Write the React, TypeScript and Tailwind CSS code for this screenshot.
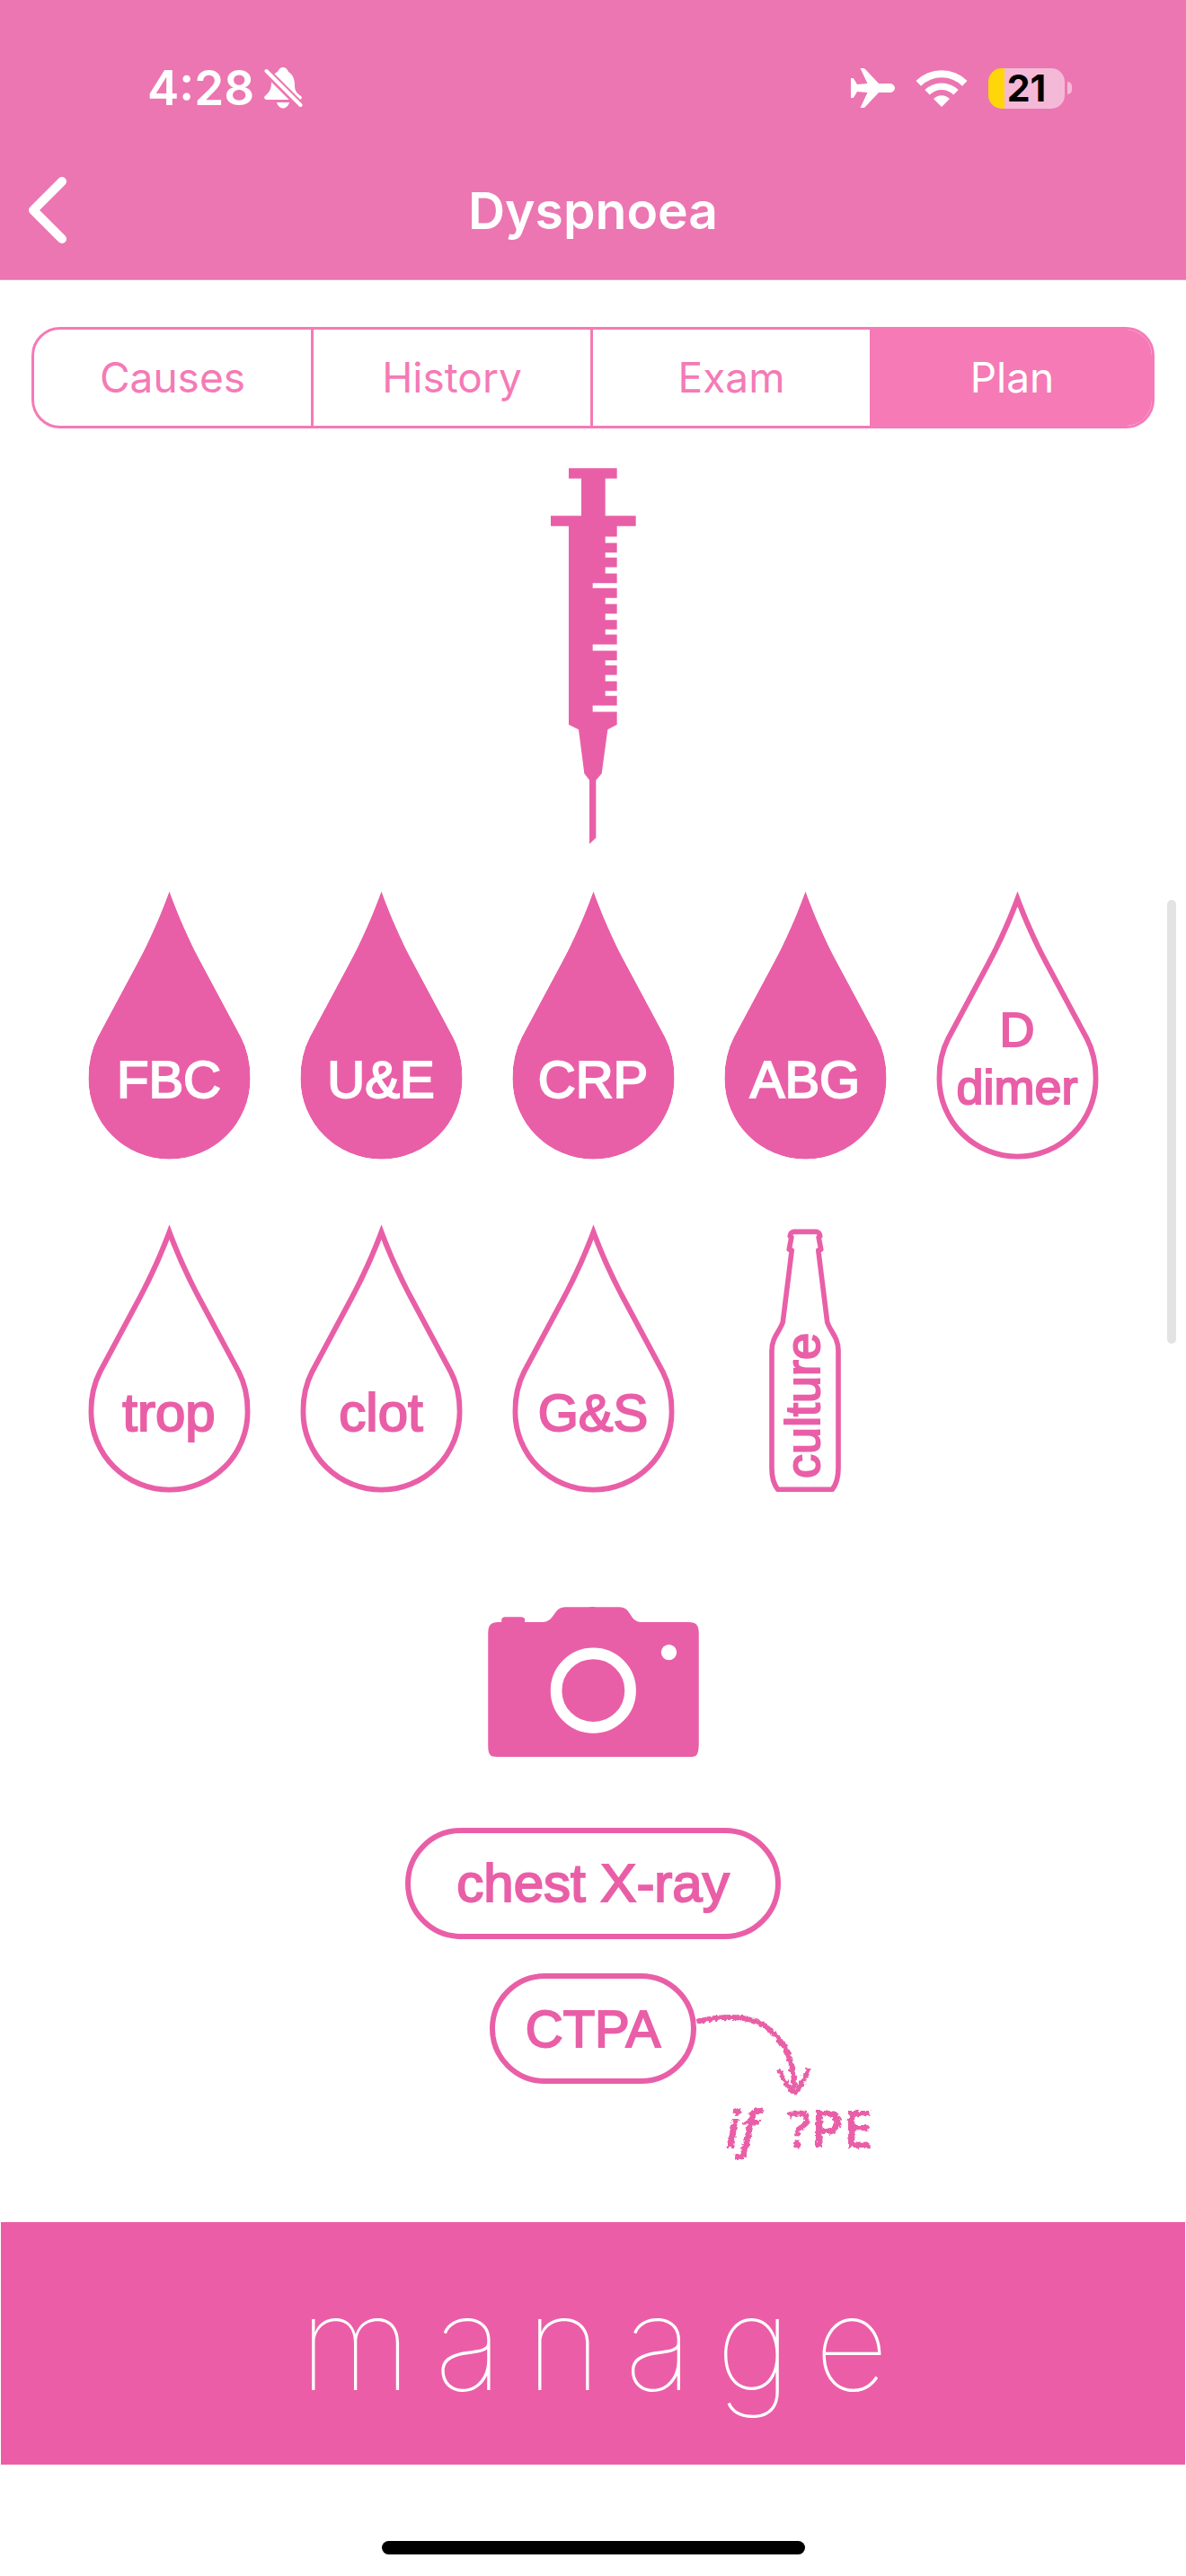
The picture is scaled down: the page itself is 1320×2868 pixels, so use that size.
import { useId, type ReactNode } from "react";

const PINK = "#e95fa7";

function BellOff() {
  return (
    <svg viewBox="0 0 43 46" className="h-[46px] w-[43px]" fill="#fff" aria-label="Silent mode">
      <path d="M21 0 C24 0 26 2 27 5 C32 8 34 13 34 20 C34 27 37 29 41 32 C43 34 41 36 39 36 H3 C0 36 -1 33 2 31 C5 28 8 25 8 17 C8 11 10 7 15 5 C16 2 18 0 21 0 Z" />
      <path d="M14 39 H28 C27 43 24 45.500 21 45.500 C18 45.500 15 43 14 39 Z" />
      <path d="M2 4 L41 43" stroke="#ec76b1" strokeWidth="9" />
      <path d="M2.500 4 L40.500 42" stroke="#fff" strokeWidth="4" strokeLinecap="round" />
    </svg>
  );
}

function Airplane() {
  return (
    <svg viewBox="0 0 49 44" className="h-[44px] w-[49px]" fill="#fff" aria-label="Airplane mode">
      <path d="M49 22 C49 25 46 27 43 27 H31 L16 43 C15 44 14 44 13 44 H10.500 L18.500 27 L7 26 L3.500 32 C3 33 2 33 0 33 V11 C2 11 3 11 3.500 12 L7 18 L18.500 17 L10.500 0 H13 C14 0 15 0 16 1 L31 17 H43 C46 17 49 19 49 22 Z" />
    </svg>
  );
}

function Wifi() {
  return (
    <svg viewBox="0 0 58 43" className="h-[43px] w-[58px]" fill="#fff" aria-label="Wi-Fi">
      <path d="M0.500 13 A40.500 40.500 0 0 1 57.500 13 L52 18.700 A33 33 0 0 0 6 18.700 Z" />
      <path d="M10.300 23 A27 27 0 0 1 47.700 23 L42.300 28.500 A19 19 0 0 0 15.700 28.500 Z" />
      <path d="M20 33 A12.500 12.500 0 0 1 38 33 L29 42 Z" />
    </svg>
  );
}

function Battery() {
  return (
    <div className="flex items-center gap-[3px]" aria-label="Battery 21 percent">
      <div className="flex h-[45px] w-[85px] items-center justify-center rounded-[15px] bg-[linear-gradient(to_right,#ffd60a_18px,#f5b9d8_18px)] text-[41px] font-bold leading-none text-black">
        21
      </div>
      <div className="h-[14px] w-[5px] rounded-r-full bg-[#f5b9d8]" />
    </div>
  );
}

function Syringe() {
  return (
    <svg viewBox="100 64 285 1256" className="h-[419px] w-[95px]" fill={PINK} aria-hidden="true">
      <path d="M160 64 H321 V99 H282 V223 H384 V258 H321 V293 H282 V314 H321 V346 H282 V363 H321 V395 H282 V416 H321 V448 H240 V465 H321 V498 H282 V518 H321 V550 H282 V571 H321 V603 H282 V620 H321 V653 H240 V674 H321 V706 H282 V723 H321 V755 H282 V776 H321 V808 H282 V825 H321 V857 H240 V878 H321 V921 L290 937 L270 1084 L251 1106 V1299 L229 1320 V1106 L212 1084 L193 937 L160 921 V258 H100 V223 H202 V99 H160 Z" />
    </svg>
  );
}

function Drop({ filled = false }: { filled?: boolean }) {
  const id = useId();
  const d =
    "M326 66 C360 160 400 245 432 305 L566 555 Q597 615 597 692 A271 271 0 0 1 55 692 Q55 615 86 555 L220 305 C252 245 292 160 326 66 Z";
  return (
    <svg viewBox="54 66 544 897" className="absolute inset-0 h-full w-full" aria-hidden="true">
      <clipPath id={id}>
        <path d={d} />
      </clipPath>
      <path
        d={d}
        clipPath={`url(#${id})`}
        fill={filled ? PINK : "#fff"}
        stroke={PINK}
        strokeWidth={filled ? 0 : 36}
        strokeMiterlimit={10}
      />
    </svg>
  );
}

function DropTest({ filled, size, children }: { filled?: boolean; size: string; children: ReactNode }) {
  return (
    <button
      className={`relative flex h-[299px] w-[181px] items-end justify-center text-center leading-[64px] [-webkit-text-stroke:2px_currentColor] ${size} ${
        filled ? "text-white" : "text-[#e95fa7]"
      }`}
    >
      <Drop filled={filled} />
      <span className="relative">{children}</span>
    </button>
  );
}

function Bottle() {
  return (
    <svg viewBox="108 54 241 881" className="absolute inset-0 h-full w-full" fill="none" stroke={PINK} strokeWidth="17" strokeLinejoin="round" aria-hidden="true">
      <path d="M189 62 H268 Q277 63 279 77 L274 80 L282 121 L273 124 L303 365 C312 395 340 415 340 460 V855 Q340 900 320 926 H137 Q117 900 117 855 V460 C117 415 145 395 154 365 L184 124 L175 121 L183 80 L178 77 Q180 63 189 62 Z" />
    </svg>
  );
}

function Camera() {
  return (
    <svg viewBox="69 57 705 502" className="h-[167px] w-[235px]" fill={PINK} aria-hidden="true">
      <path d="M110 108 H114 V100 Q116 91 126 91 H180 Q191 92 192 100 V108 H250 C295 108 285 58 328 58 H405 Q418 55 430 58 H508 C550 58 540 108 582 108 H740 C765 108 774 118 774 145 V520 C772 550 768 559 750 559 H100 C75 559 69 552 69 520 V145 C70 115 78 108 110 108 Z" />
      <circle cx="421" cy="337" r="124" fill="none" stroke="#fff" strokeWidth="38" />
      <circle cx="674" cy="209" r="26" fill="#fff" />
    </svg>
  );
}

function Note() {
  return (
    <div className="absolute left-full top-[46px] w-[210px] text-[#e95fa7]">
      <svg viewBox="774 2243 204 92" className="h-[92px] w-[204px]" fill="none" stroke={PINK} strokeLinecap="round" strokeLinejoin="round" aria-hidden="true">
        <defs>
          <filter id="chalk" x="-5%" y="-5%" width="110%" height="110%">
            <feTurbulence type="fractalNoise" baseFrequency="0.25" numOctaves="2" seed="4" result="n" />
            <feDisplacementMap in="SourceGraphic" in2="n" scale="6" xChannelSelector="R" yChannelSelector="G" />
          </filter>
        </defs>
        <g filter="url(#chalk)">
          <path d="M777 2250 C812 2243 838 2244 857 2261 C874 2276 883 2298 883 2322" strokeWidth="6" />
          <path d="M867 2306 Q874 2323 884 2330 Q894 2318 898 2304" strokeWidth="5" />
        </g>
      </svg>
      <p className="flex gap-[32px] pl-[32px] font-['Noto_Sans',sans-serif] text-[58px] font-semibold leading-[68px] [filter:url(#chalk)]">
        <span className="italic">if</span>
        <span>?PE</span>
      </p>
    </div>
  );
}

const tabs = ["Causes", "History", "Exam", "Plan"];

export default function App() {
  return (
    <div className="relative flex w-full flex-col items-center bg-white font-['Inter',sans-serif]">
      <header className="w-full border-b border-[#c4b4bd] bg-[#ec76b1] pb-[39px] text-white">
        <div className="flex h-[196px] items-center justify-between pl-[164px] pr-[127px]">
          <div className="flex items-center gap-[11px]">
            <span className="text-[53px] font-semibold leading-none">4:28</span>
            <BellOff />
          </div>
          <div className="flex items-center gap-[23px]">
            <Airplane />
            <Wifi />
            <Battery />
          </div>
        </div>
        <div className="grid grid-cols-[1fr_auto_1fr] items-center px-[30px]">
          <button aria-label="Back" className="justify-self-start">
            <svg viewBox="0 0 46 76" className="h-[76px] w-[46px]" fill="none" stroke="#fff" strokeWidth="10" strokeLinecap="round" strokeLinejoin="round">
              <path d="M39 6 L7 38 L39 70" />
            </svg>
          </button>
          <h1 className="text-[57px] font-semibold leading-none">Dyspnoea</h1>
        </div>
      </header>

      <div className="mt-[52px] w-full px-[35px]">
        <div role="tablist" className="grid h-[113px] grid-cols-4 divide-x-3 divide-[#f57ab6] overflow-hidden rounded-[32px] border-3 border-[#f57ab6]">
          {tabs.map((t) => (
            <button
              key={t}
              role="tab"
              aria-selected={t === "Plan"}
              className={`text-[46px] ${t === "Plan" ? "bg-[#f57ab6] text-white" : "text-[#f57ab6]"}`}
            >
              {t}
            </button>
          ))}
        </div>
      </div>

      <main className="flex w-full flex-col items-center pt-[44px] font-['Liberation_Sans',Arial,sans-serif] text-[#e95fa7]">
        <Syringe />

        <div className="mt-[52px] grid w-full max-w-[1180px] grid-cols-5 justify-items-center gap-y-[72px]">
          <DropTest filled size="text-[58px] pb-[57px]">FBC</DropTest>
          <DropTest filled size="text-[58px] pb-[57px]">U&amp;E</DropTest>
          <DropTest filled size="text-[58px] pb-[57px]">CRP</DropTest>
          <DropTest filled size="text-[58px] pb-[57px]">ABG</DropTest>
          <DropTest size="text-[54px] pb-[49px]">
            D<br />
            dimer
          </DropTest>
          <DropTest size="text-[60px] pb-[57px]">trop</DropTest>
          <DropTest size="text-[60px] pb-[57px]">clot</DropTest>
          <DropTest size="text-[58px] pb-[57px]">G&amp;S</DropTest>
          <button className="relative flex h-[294px] w-[80px] items-end justify-center self-end pb-[16px] pr-[6px] text-[54px] leading-[64px] [-webkit-text-stroke:2px_currentColor]">
            <Bottle />
            <span className="relative rotate-180 [writing-mode:vertical-rl]">culture</span>
          </button>
        </div>

        <div className="mt-[127px]">
          <Camera />
        </div>

        <button className="mt-[79px] h-[124px] rounded-full border-6 border-[#e95fa7] px-[51px] text-[60px] leading-none [-webkit-text-stroke:2px_currentColor]">
          chest X-ray
        </button>
        <div className="relative mt-[38px]">
          <button className="h-[123px] rounded-full border-6 border-[#e95fa7] px-[34px] text-[58px] leading-none [-webkit-text-stroke:2px_currentColor]">
            CTPA
          </button>
          <Note />
        </div>

        <div className="mt-[154px] w-full px-px">
          <h2 className="flex h-[270px] items-center justify-center bg-[#eb5ea7] pl-[28px] font-['Inter',sans-serif] text-[144px] font-thin tracking-[0.18em] text-white">
            manage
          </h2>
        </div>
      </main>

      <div className="mb-[24px] mt-[85px] h-[15px] w-[471px] rounded-full bg-black" />
      <div className="absolute right-[11px] top-[1002px] h-[494px] w-[10px] rounded-full bg-[#e3e3e3]" />
    </div>
  );
}
